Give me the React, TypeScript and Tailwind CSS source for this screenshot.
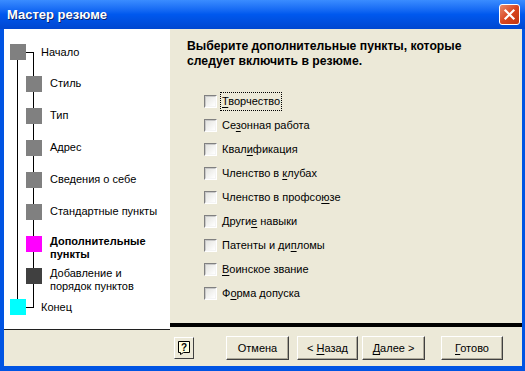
import React from "react";

const font = { fontFamily: '"Liberation Sans", Arial, sans-serif' };

function U({ children }: { children: React.ReactNode }) {
  return <span className="underline underline-offset-2">{children}</span>;
}

const items: React.ReactNode[] = [
  <>
    <U>Т</U>ворчество
  </>,
  <>
    Се<U>з</U>онная работа
  </>,
  <>
    Квал<U>и</U>фикация
  </>,
  <>
    Членство в <U>к</U>лубах
  </>,
  <>
    Членство в профсо<U>ю</U>зе
  </>,
  <>
    Други<U>е</U> навыки
  </>,
  <>
    Патенты и ди<U>п</U>ломы
  </>,
  <>
    <U>В</U>оинское звание
  </>,
  <>
    Ф<U>о</U>рма допуска
  </>,
];

const steps: { label: React.ReactNode; color: string; bold?: boolean }[] = [
  { label: "Стиль", color: "bg-[#808080]" },
  { label: "Тип", color: "bg-[#808080]" },
  { label: "Адрес", color: "bg-[#808080]" },
  { label: "Сведения о себе", color: "bg-[#808080]" },
  { label: "Стандартные пункты", color: "bg-[#808080]" },
  { label: "Дополнительные пункты", color: "bg-[#ff00ff]", bold: true },
  { label: "Добавление и порядок пунктов", color: "bg-[#404040]" },
];

function Checkbox() {
  return (
    <div className="w-[13px] h-[13px] border border-t-[#808080] border-l-[#808080] border-b-white border-r-white bg-white">
      <div className="w-full h-full border border-t-[#c8c8c8] border-l-[#c8c8c8] border-b-[#f4f4f4] border-r-[#f4f4f4] bg-gradient-to-br from-[#e4e4e0] to-white" />
    </div>
  );
}

function Btn({ children, w }: { children: React.ReactNode; w: string }) {
  return (
    <div
      className={`${w} h-[24px] flex items-center justify-center text-[11px] text-black bg-[#ece9d8] border border-t-white border-l-white border-b-[#404040] border-r-[#404040] shadow-[inset_-1px_-1px_0_#aca899]`}
    >
      <span className="whitespace-pre">{children}</span>
    </div>
  );
}

export default function App() {
  return (
    <div className="w-[525px] h-[371px] flex flex-col bg-[#0054e3]" style={font}>
      {/* Title bar */}
      <div className="h-[29px] flex items-center justify-between pl-[7px] pr-[5px] bg-gradient-to-b from-[#3a8cff] via-[#0058ee] to-[#0047d0]">
        <span className="text-white text-[13px] font-bold [text-shadow:1px_1px_0_#0a246a]">
          Мастер резюме
        </span>
        <div className="w-[21px] h-[21px] rounded-[3px] border border-white bg-gradient-to-br from-[#e8896a] via-[#d9451e] to-[#c03510] flex items-center justify-center">
          <svg width="13" height="13" viewBox="0 0 13 13">
            <path d="M2.5 2.5 L10.5 10.5 M10.5 2.5 L2.5 10.5" stroke="white" strokeWidth="2.2" strokeLinecap="square" />
          </svg>
        </div>
      </div>
      {/* Body */}
      <div className="flex-1 flex flex-col mr-[3px] mb-[5px] ml-[4px] bg-[#ece9d8]">
        <div className="flex">
          {/* Left panel */}
          <div className="w-[166px] bg-white border-b border-[#202020] relative h-[301px]">
            <svg className="absolute left-0 top-0" width="166" height="300">
              <line x1="13.5" y1="31" x2="13.5" y2="270" stroke="black" strokeWidth="1" />
              <line x1="22" y1="23.5" x2="29.5" y2="23.5" stroke="black" strokeWidth="1" />
              <line x1="29.5" y1="23" x2="29.5" y2="279" stroke="black" strokeWidth="1" />
              <line x1="22" y1="278.5" x2="30" y2="278.5" stroke="black" strokeWidth="1" />
            </svg>
            <div className="relative flex flex-col pt-[15px] text-[11px] text-black">
              <div className="flex items-center h-[16px]">
                <div className="ml-[6px] w-[16px] h-[16px] bg-[#808080]" />
                <span className="ml-[15px]">Начало</span>
              </div>
              <div className="flex flex-col gap-[16px] mt-[16px]">
                {steps.map((s, i) => (
                  <div key={i} className="flex items-start h-[16px]">
                    <div className={`ml-[22px] w-[16px] h-[16px] shrink-0 ${s.color}`} />
                    <span
                      className={`ml-[8px] leading-[13px] ${s.bold ? "font-bold" : ""} ${
                        i >= 5 ? "-mt-[1px] w-[110px]" : "mt-[1px]"
                      }`}
                    >
                      {s.label}
                    </span>
                  </div>
                ))}
              </div>
              <div className="flex items-center h-[16px] mt-[15px]">
                <div className="ml-[6px] w-[16px] h-[16px] bg-[#00ffff]" />
                <span className="ml-[15px]">Конец</span>
              </div>
            </div>
          </div>
          {/* Right panel */}
          <div className="flex-1 flex flex-col">
            <div className="flex-1 pl-[17px] pt-[10px]">
              <div className="text-[12.2px] font-bold leading-[15px] text-black">
                Выберите дополнительные пункты, которые
                <br />
                следует включить в резюме.
              </div>
              <div className="flex flex-col mt-[26px] ml-[17px] gap-[11px]">
                {items.map((it, i) => (
                  <div key={i} className="flex items-center h-[13px]">
                    <Checkbox />
                    <span
                      className={`ml-[4px] text-[11px] text-black px-[1px] ${
                        i === 0 ? "outline outline-1 outline-dotted outline-black" : ""
                      }`}
                    >
                      {it}
                    </span>
                  </div>
                ))}
              </div>
            </div>
            <div className="h-[4px] bg-black mb-[3px]" />
          </div>
        </div>
        {/* Bottom bar */}
        <div className="flex-1 flex items-center">
          <div className="ml-[170px] w-[20px] h-[22px] flex items-center justify-center bg-[#ece9d8] border border-t-white border-l-white border-b-[#404040] border-r-[#404040]">
            <svg width="14" height="16" viewBox="0 0 14 16">
              <path d="M1.5 1.5 H12.5 V12.5 H6.5 L3.5 14.5 V12.5 H1.5 Z" fill="#ffffe1" stroke="black" strokeWidth="1" />
              <text x="7" y="10.5" textAnchor="middle" fontSize="10" fontWeight="bold" fontFamily="Liberation Sans, Arial, sans-serif">?</text>
            </svg>
          </div>
          <div className="ml-[32px]">
            <Btn w="w-[63px]">Отмена</Btn>
          </div>
          <div className="ml-[8px]">
            <Btn w="w-[61px]">
              {"< "}
              <U>Н</U>азад
            </Btn>
          </div>
          <div className="ml-[4px]">
            <Btn w="w-[63px]">
              <U>Д</U>
              {"алее >"}
            </Btn>
          </div>
          <div className="ml-[16px]">
            <Btn w="w-[62px]">
              <U>Г</U>отово
            </Btn>
          </div>
        </div>
      </div>
    </div>
  );
}
